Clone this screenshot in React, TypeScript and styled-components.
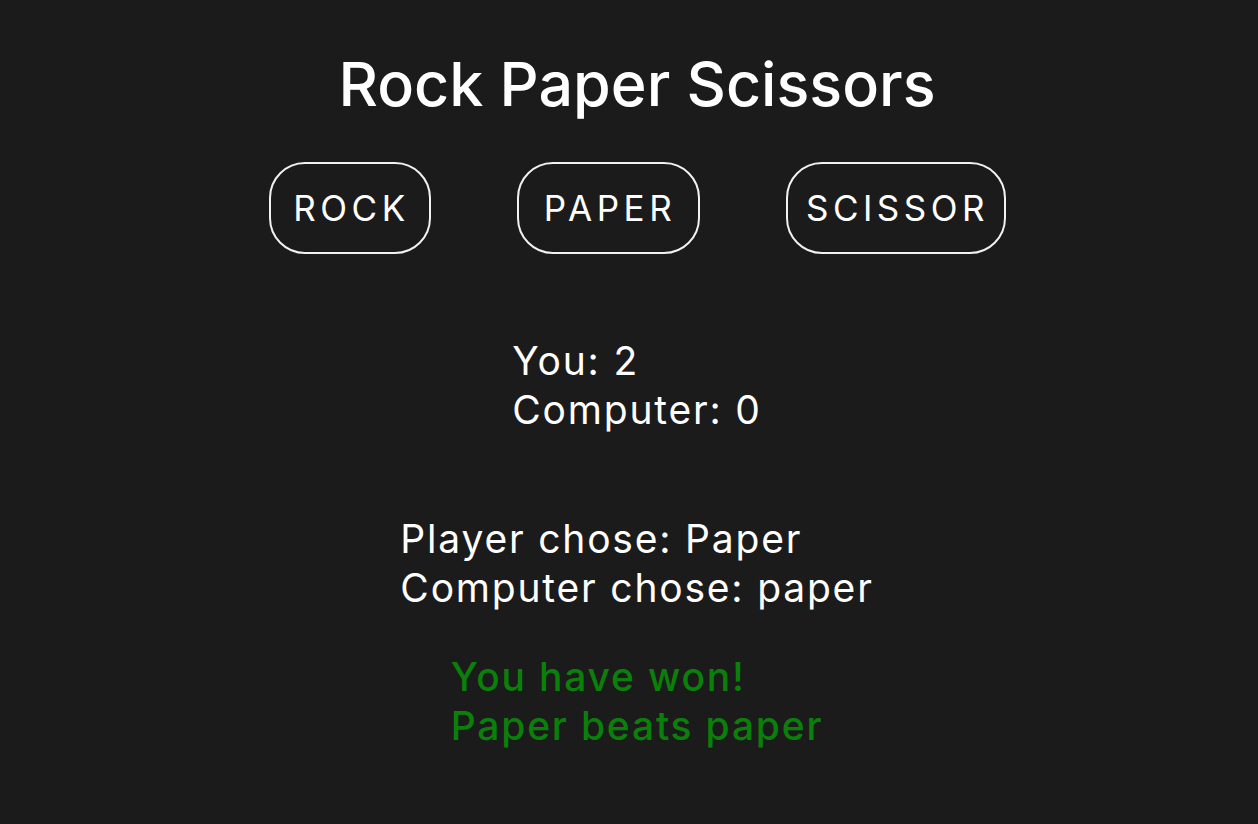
import React from "react";
import styled, { createGlobalStyle } from "styled-components";

const Global = createGlobalStyle`
  html, body { margin: 0; padding: 0; background: #1b1b1b; }
  body { font-family: Inter, "Open Sans", sans-serif; color: #ffffff; }
`;

const Page = styled.main`
  min-height: 824px;
  box-sizing: border-box;
  padding: 44px 0 0 16px;
  display: flex;
  flex-direction: column;
  align-items: center;
`;

const Title = styled.h1`
  margin: 0;
  font-size: 61px;
  font-weight: 500;
  line-height: 80px;
  letter-spacing: 0;
`;

const ButtonRow = styled.div`
  display: flex;
  gap: 86px;
  margin-top: 38px;
`;

const ChoiceButton = styled.button<{ $w: number }>`
  width: ${(p) => p.$w}px;
  height: 92px;
  box-sizing: border-box;
  background: transparent;
  color: #ffffff;
  border: 2px solid #f2f2f2;
  border-radius: 36px;
  font-family: inherit;
  font-size: 35px;
  font-weight: 400;
  letter-spacing: 4.5px;
  padding: 0 0 0 4px;
  cursor: pointer;
`;

const Block = styled.div<{ $top: number; $color?: string; $weight?: number }>`
  margin-top: ${(p) => p.$top}px;
  display: flex;
  flex-direction: column;
  align-items: flex-start;
  font-size: 39px;
  line-height: 49px;
  letter-spacing: 1.8px;
  color: ${(p) => p.$color ?? "#ffffff"};
  font-weight: ${(p) => p.$weight ?? 400};
`;

export default function App() {
  return (
    <>
      <Global />
      <Page>
        <Title>Rock Paper Scissors</Title>
        <ButtonRow>
          <ChoiceButton $w={162}>ROCK</ChoiceButton>
          <ChoiceButton $w={183}>PAPER</ChoiceButton>
          <ChoiceButton $w={220}>SCISSOR</ChoiceButton>
        </ButtonRow>
        <Block $top={82}>
          <span>You: 2</span>
          <span>Computer: 0</span>
        </Block>
        <Block $top={80}>
          <span>Player chose: Paper</span>
          <span>Computer chose: paper</span>
        </Block>
        <Block $top={40} $color="#0a800a" $weight={500}>
          <span>You have won!</span>
          <span>Paper beats paper</span>
        </Block>
      </Page>
    </>
  );
}
